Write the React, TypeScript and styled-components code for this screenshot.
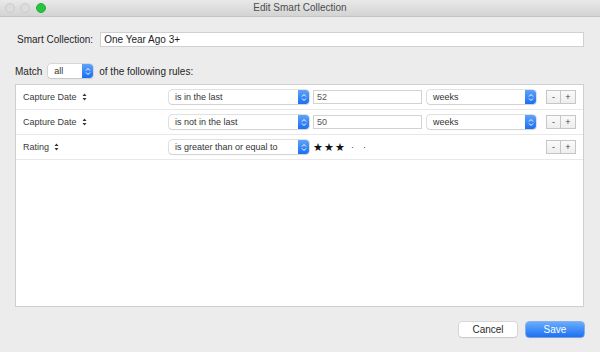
import styled, { createGlobalStyle } from "styled-components";

const GlobalStyle = createGlobalStyle`
  html, body {
    margin: 0;
    padding: 0;
    background: #ececec;
  }
  * {
    box-sizing: border-box;
  }
`;

const Window = styled.div`
  width: 600px;
  height: 352px;
  display: flex;
  flex-direction: column;
  background: #ececec;
  font-family: "Liberation Sans", Arial, sans-serif;
  color: #262626;
  overflow: hidden;
`;

const TitleBar = styled.div`
  height: 17px;
  flex: none;
  display: grid;
  grid-template-columns: 60px 1fr 60px;
  align-items: center;
  background: linear-gradient(#e9e9e9, #d3d3d3);
  border-bottom: 1px solid #c4c4c4;
`;

const Lights = styled.div`
  display: flex;
  gap: 5px;
  padding-left: 5px;
  align-items: center;
  margin-top: -1px;
`;

const Light = styled.span<{ $color: string; $edge: string }>`
  width: 10px;
  height: 10px;
  border-radius: 50%;
  background: ${(p) => p.$color};
  border: 1px solid ${(p) => p.$edge};
  &:last-child {
    margin-left: 1px;
  }
`;

const Title = styled.div`
  text-align: center;
  font-size: 10px;
  color: #4d4d4d;
  margin-top: -1px;
`;

const Body = styled.div`
  flex: 1;
  display: flex;
  flex-direction: column;
  padding: 15px 16px 15px 15px;
`;

const NameRow = styled.div`
  display: flex;
  align-items: center;
  padding-left: 2px;
  height: 15px;
`;

const Label = styled.span`
  font-size: 10px;
  color: #262626;
  white-space: nowrap;
`;

const NameInput = styled.div`
  margin-left: 7px;
  flex: 1;
  height: 15px;
  background: #fff;
  border: 1px solid #d0d0d0;
  font-size: 10px;
  line-height: 13px;
  padding-left: 3px;
  color: #1e1e1e;
`;

const MatchRow = styled.div`
  display: flex;
  align-items: center;
  margin-top: 17px;
  height: 14px;
  gap: 6px;
`;

const SelectBox = styled.div<{ $w: number }>`
  width: ${(p) => p.$w}px;
  height: 14px;
  display: flex;
  align-items: stretch;
  background: #fff;
  border-radius: 3px;
  box-shadow: 0 0 0 0.5px #c2c2c2, 0 1px 1px rgba(0, 0, 0, 0.12);
  overflow: hidden;
  flex: none;
`;

const SelectText = styled.span`
  flex: 1;
  font-size: 9px;
  line-height: 14px;
  padding-left: 6px;
  color: #333;
  white-space: nowrap;
  overflow: hidden;
`;

const ArrowBox = styled.span`
  width: 11px;
  flex: none;
  display: flex;
  align-items: center;
  justify-content: center;
  background: linear-gradient(#5ea3fb, #1b6ff3);
  border-radius: 0 3px 3px 0;
`;

const RulesPanel = styled.div`
  margin-top: 6px;
  flex: 1;
  background: #fff;
  border: 1px solid #cfcfcf;
  display: flex;
  flex-direction: column;
`;

const RuleRow = styled.div`
  height: 25px;
  display: flex;
  align-items: center;
  padding-left: 7px;
  border-bottom: 1px solid #e8e8e8;
`;

const FieldName = styled.div`
  width: 146px;
  flex: none;
  display: flex;
  align-items: center;
  gap: 5px;
  font-size: 9px;
  color: #3a3a3a;
`;

const ValueInput = styled.div`
  margin-left: 4px;
  width: 109px;
  height: 14px;
  flex: none;
  border: 1px solid #d2d2d2;
  background: #fff;
  font-size: 9px;
  line-height: 12px;
  padding-left: 3px;
  color: #555;
`;

const UnitSlot = styled.div`
  margin-left: 5px;
  flex: none;
`;

const Stars = styled.div`
  margin-left: 4px;
  display: flex;
  align-items: center;
  gap: 1px;
  font-size: 11px;
  color: #111;
`;

const Dot = styled.span`
  width: 9px;
  text-align: center;
  font-size: 9px;
  color: #333;
  margin-left: 2px;
`;

const Steppers = styled.div`
  margin-left: auto;
  margin-right: 7px;
  display: flex;
`;

const StepButton = styled.div`
  width: 15px;
  height: 14px;
  border: 1px solid #c6c6c6;
  background: linear-gradient(#fafafa, #eeeeee);
  font-size: 9px;
  line-height: 12px;
  text-align: center;
  color: #444;
  & + & {
    border-left: none;
  }
`;

const Footer = styled.div`
  margin-top: 15px;
  display: flex;
  justify-content: flex-end;
  gap: 9px;
`;

const Button = styled.div<{ $primary?: boolean }>`
  width: 58px;
  height: 15px;
  border-radius: 3px;
  font-size: 10px;
  line-height: 15px;
  text-align: center;
  color: ${(p) => (p.$primary ? "#fff" : "#2a2a2a")};
  background: ${(p) =>
    p.$primary ? "linear-gradient(#69acfc, #1c70f4)" : "#fff"};
  box-shadow: ${(p) =>
    p.$primary
      ? "0 0 0 0.5px #2b74e6, 0 1px 1px rgba(0,0,0,0.15)"
      : "0 0 0 0.5px #c4c4c4, 0 1px 1px rgba(0,0,0,0.12)"};
`;

const UpDown = () => (
  <svg width="6" height="9" viewBox="0 0 6 9">
    <path d="M1 3.5 L3 1.5 L5 3.5" fill="none" stroke="#fff" strokeWidth="1" />
    <path d="M1 5.5 L3 7.5 L5 5.5" fill="none" stroke="#fff" strokeWidth="1" />
  </svg>
);

const SortMark = () => (
  <svg width="5" height="8" viewBox="0 0 5 8">
    <path d="M2.5 0.5 L4.5 3 L0.5 3 Z" fill="#333" />
    <path d="M2.5 7.5 L4.5 5 L0.5 5 Z" fill="#333" />
  </svg>
);

const Select = ({ w, text }: { w: number; text: string }) => (
  <SelectBox $w={w}>
    <SelectText>{text}</SelectText>
    <ArrowBox>
      <UpDown />
    </ArrowBox>
  </SelectBox>
);

const rules = [
  { field: "Capture Date", op: "is in the last", value: "52", unit: "weeks" },
  { field: "Capture Date", op: "is not in the last", value: "50", unit: "weeks" },
  { field: "Rating", op: "is greater than or equal to", stars: 3 },
];

export default function App() {
  return (
    <>
      <GlobalStyle />
      <Window>
        <TitleBar>
          <Lights>
            <Light $color="#dcdcdc" $edge="#cbcbcb" />
            <Light $color="#dcdcdc" $edge="#cbcbcb" />
            <Light $color="#2ac33f" $edge="#22b033" />
          </Lights>
          <Title>Edit Smart Collection</Title>
          <div />
        </TitleBar>
        <Body>
          <NameRow>
            <Label>Smart Collection:</Label>
            <NameInput>One Year Ago 3+</NameInput>
          </NameRow>
          <MatchRow>
            <Label>Match</Label>
            <Select w={45} text="all" />
            <Label>of the following rules:</Label>
          </MatchRow>
          <RulesPanel>
            {rules.map((r, i) => (
              <RuleRow key={i}>
                <FieldName>
                  {r.field}
                  <SortMark />
                </FieldName>
                <Select w={140} text={r.op} />
                {r.stars ? (
                  <Stars>
                    <span>★</span>
                    <span>★</span>
                    <span>★</span>
                    <Dot>·</Dot>
                    <Dot>·</Dot>
                  </Stars>
                ) : (
                  <>
                    <ValueInput>{r.value}</ValueInput>
                    <UnitSlot>
                      <Select w={109} text={r.unit ?? ""} />
                    </UnitSlot>
                  </>
                )}
                <Steppers>
                  <StepButton>-</StepButton>
                  <StepButton>+</StepButton>
                </Steppers>
              </RuleRow>
            ))}
          </RulesPanel>
          <Footer>
            <Button>Cancel</Button>
            <Button $primary>Save</Button>
          </Footer>
        </Body>
      </Window>
    </>
  );
}
